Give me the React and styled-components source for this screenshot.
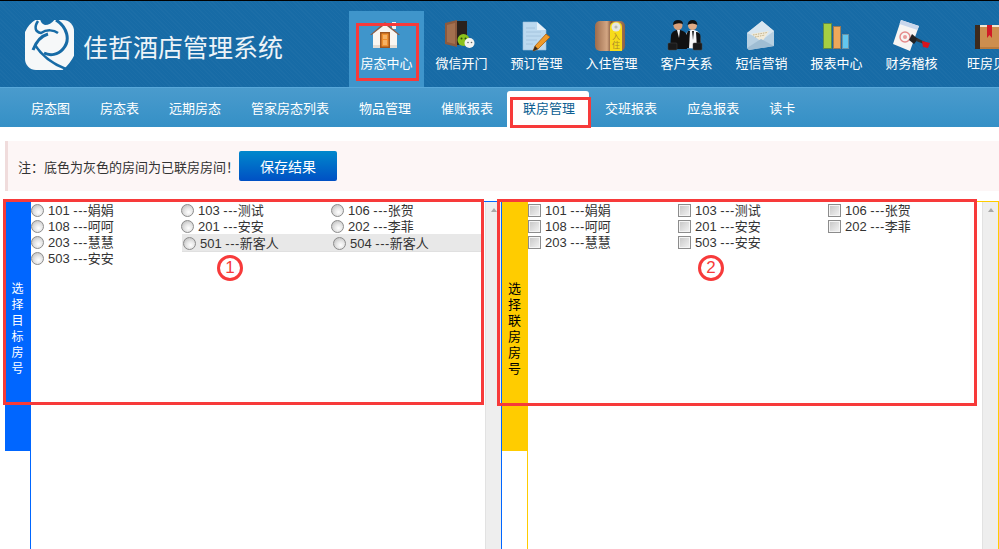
import React from "react";
import styled, { createGlobalStyle } from "styled-components";

const Global = createGlobalStyle`
  html, body {
    margin: 0;
    padding: 0;
    background: #fff;
  }
  body {
    font-family: "Liberation Sans", "Noto Sans CJK SC", sans-serif;
    font-size: 13px;
    color: #333;
  }
`;

const navItems = [
  { label: "房态中心", icon: "home", active: true },
  { label: "微信开门", icon: "door" },
  { label: "预订管理", icon: "doc" },
  { label: "入住管理", icon: "checkin" },
  { label: "客户关系", icon: "people" },
  { label: "短信营销", icon: "mail" },
  { label: "报表中心", icon: "bars" },
  { label: "财务稽核", icon: "stamp" },
  { label: "旺房贝", icon: "book" },
];

const tabs = ["房态图", "房态表", "远期房态", "管家房态列表", "物品管理", "催账报表", "联房管理", "交班报表", "应急报表", "读卡"];

const targetRooms = [
  { no: 101, name: "娟娟" },
  { no: 103, name: "测试" },
  { no: 106, name: "张贺" },
  { no: 108, name: "呵呵" },
  { no: 201, name: "安安" },
  { no: 202, name: "李菲" },
  { no: 203, name: "慧慧" },
  { no: 501, name: "新客人", linked: true },
  { no: 504, name: "新客人", linked: true },
  { no: 503, name: "安安" },
];

const joinRooms = [
  { no: 101, name: "娟娟" },
  { no: 103, name: "测试" },
  { no: 106, name: "张贺" },
  { no: 108, name: "呵呵" },
  { no: 201, name: "安安" },
  { no: 202, name: "李菲" },
  { no: 203, name: "慧慧" },
  { no: 503, name: "安安" },
];

function Logo() {
  const bg = "#176ba6";
  return (
    <svg width="50" height="50" viewBox="0 0 50 50">
      <rect x="0" y="0" width="49" height="50" rx="11" fill="#f6f8f9" />
      {/* corners and top notch */}
      <path d="M-1 -1 L12 -1 Q4 3 0 12Z" fill={bg} />
      <path d="M15 -1 L30 -1 Q26 5 20 5 Q16 4 15 -1Z" fill={bg} />
      <path d="M36 51 Q44 46 50 34 L50 51Z" fill={bg} />
      {/* swirl bands */}
      <path d="M31 0 C42 7 46 20 38 29 C33 35 25 36 19 33" fill="none" stroke={bg} strokeWidth="3" />
      <path d="M13 1 C9 7 10 12 16 13 C22 9 29 10 33 13" fill="none" stroke={bg} strokeWidth="2.5" />
      <path d="M8 30 C11 22 16 16 23 14" fill="none" stroke={bg} strokeWidth="3" />
      <path d="M10 25 C17 36 29 45 44 50" fill="none" stroke={bg} strokeWidth="2.5" />
    </svg>
  );
}

function NavIcon({ name }) {
  switch (name) {
    case "home":
      return (
        <svg width="40" height="32" viewBox="0 0 40 32">
          <path d="M6 13 L18 3 L30 13 L30 28 L6 28Z" fill="#f9f6f1" />
          <path d="M6 25 L30 25 L30 28 L6 28Z" fill="#e4ddd4" />
          <rect x="25" y="2" width="4" height="7" fill="#f4f4f4" />
          <path d="M3 15 L18 2 L33 15 L31.5 15 L18 4.5 L4.5 15Z" fill="#8a5a44" />
          <rect x="13" y="12" width="10" height="16" fill="#a0561e" />
          <rect x="14.5" y="13.5" width="7" height="13" fill="#ef9030" />
          <rect x="16" y="15" width="4" height="4" fill="#f7b264" />
          <rect x="16" y="20" width="4" height="5" fill="#f7b264" />
        </svg>
      );
    case "door":
      return (
        <svg width="40" height="32" viewBox="0 0 40 32">
          <rect x="12" y="1" width="13" height="24" fill="#2b211c" />
          <path d="M3 3 L15 0 L15 27 L3 24Z" fill="#8c5a3e" />
          <path d="M5 5 L13 3 L13 24 L5 22Z" fill="#a3704f" />
          <circle cx="21.5" cy="20" r="6" fill="#8bc21c" />
          <circle cx="19.5" cy="18.5" r="1" fill="#2b4a10" />
          <circle cx="23.5" cy="18.5" r="1" fill="#2b4a10" />
          <circle cx="27.5" cy="23" r="5" fill="#f4f4f0" />
          <circle cx="26" cy="22.5" r="0.8" fill="#666" />
          <circle cx="29.5" cy="22.5" r="0.8" fill="#666" />
        </svg>
      );
    case "doc":
      return (
        <svg width="40" height="32" viewBox="0 0 40 32">
          <path d="M6 2 L20 2 L29 10 L29 30 L6 30Z" fill="#bcd9ef" stroke="#9cc0dc" strokeWidth="0.6" />
          <path d="M20 2 L20 10 L29 10Z" fill="#e6f1f9" />
          <path d="M9 8 H18 M9 12 H24 M9 16 H24 M9 20 H20 M9 24 H16" stroke="#a4c4de" strokeWidth="1" />
          <path d="M29 14 L33 17 L21 29 L16 31 L18 26Z" fill="#f09a28" stroke="#a85f12" strokeWidth="0.8" />
          <path d="M16 31 L18 26 L21 29Z" fill="#3a2a1a" />
        </svg>
      );
    case "checkin":
      return (
        <svg width="40" height="32" viewBox="0 0 40 32">
          <defs>
            <linearGradient id="wood" x1="0" y1="0" x2="1" y2="0">
              <stop offset="0" stopColor="#9c6c4c" />
              <stop offset="0.4" stopColor="#d3a683" />
              <stop offset="0.55" stopColor="#7b4f35" />
              <stop offset="0.7" stopColor="#b98a68" />
              <stop offset="1" stopColor="#8a5f44" />
            </linearGradient>
          </defs>
          <rect x="3" y="1" width="30" height="30" rx="5" fill="url(#wood)" />
          <path d="M18 7 Q18 2 24 2 Q30 2 30 7 L30 31 L18 31Z" fill="#f7dc1a" />
          <circle cx="24" cy="7" r="4.5" fill="#e6e6e0" />
          <circle cx="24" cy="7" r="1.6" fill="#b9b9b0" />
          <TagText x="24" y="19">入</TagText>
          <TagText x="24" y="28">住</TagText>
        </svg>
      );
    case "people":
      return (
        <svg width="40" height="32" viewBox="0 0 40 32">
          <path d="M3 29 L4 15 Q5 11 10 10 L13 10 Q18 11 20 15 L20 29Z" fill="#111" />
          <path d="M10 10 L13 10 L12 18Z" fill="#f4f4f4" />
          <circle cx="11" cy="5.5" r="4.5" fill="#d9a07a" />
          <path d="M6 5 Q6 0 11 0 Q16 0 16 4 Q11 2 6 5Z" fill="#111" />
          <path d="M19 28 L19 14 Q20 11 24 10 L27 10 Q32 11 33 15 L34 29Z" fill="#f7f7f7" />
          <path d="M29 12 Q33 12 33.5 16 L34 29 L30 29Z" fill="#111" />
          <path d="M19 15 L21 11 L23 11 L22 28 L19 28Z" fill="#111" />
          <path d="M25 11 L27 11 L26 20Z" fill="#222" />
          <circle cx="25.5" cy="5.5" r="4.5" fill="#e0ab86" />
          <path d="M20.5 5 Q21 0 25.5 0 Q30 0 30.5 5 Q25 2 20.5 5Z" fill="#111" />
          <rect x="1" y="23" width="9" height="7" rx="1" fill="#1a1a1a" stroke="#444" strokeWidth="0.5" />
          <rect x="26" y="23" width="9" height="7" rx="1" fill="#1a1a1a" stroke="#444" strokeWidth="0.5" />
        </svg>
      );
    case "mail":
      return (
        <svg width="40" height="32" viewBox="0 0 40 32">
          <path d="M5 13 L20 1 L32 11 L32 26 L7 30 L5 28Z" fill="#b7d0e2" />
          <path d="M5 13 L20 1 L32 11 L20 20Z" fill="#d8e6f0" />
          <path d="M9 14 L27 11 L20 22Z" fill="#f1ead8" />
          <path d="M11 15 L25 12.5 M13 17 L23 15" stroke="#c4b38a" strokeWidth="1" strokeDasharray="1.5 1" />
          <path d="M5 28 L19 19 L32 26 L7 30Z" fill="#9fbdd3" />
        </svg>
      );
    case "bars":
      return (
        <svg width="40" height="32" viewBox="0 0 40 32">
          <rect x="6.5" y="3.5" width="8" height="25" fill="#a6cf42" stroke="#5f8a4a" />
          <rect x="16.5" y="6.5" width="7" height="22" fill="#f0a85a" stroke="#9a7a55" />
          <rect x="25.5" y="14.5" width="6" height="14" fill="#62c6ee" stroke="#6a94a8" />
        </svg>
      );
    case "stamp":
      return (
        <svg width="40" height="32" viewBox="0 0 40 32">
          <path d="M9 0 L27 6 L18 31 L1 24Z" fill="#f7f5f3" />
          <path d="M9 0 L27 6 L25.5 10 L7.5 4Z" fill="#c9d7ec" />
          <circle cx="13" cy="17" r="5" fill="none" stroke="#e58a8a" strokeWidth="1.4" />
          <circle cx="13" cy="17" r="2" fill="#ea9a9a" />
          <path d="M20 14 L26 19 L22 24 L17 20Z" fill="#222" />
          <path d="M25 18 L33 22 L32 24 L24 21Z" fill="#333" />
          <path d="M30 21 L38 23 L36 28 L31 27Z" fill="#d8141e" />
        </svg>
      );
    case "book":
      return (
        <svg width="40" height="32" viewBox="0 0 40 32">
          <rect x="8" y="5" width="32" height="24" fill="#b97b3e" />
          <rect x="13" y="7" width="27" height="20" fill="#cd8e4e" />
          <rect x="8" y="5" width="5" height="24" fill="#3d2a1c" />
          <rect x="13" y="5" width="27" height="2" fill="#f2e6d2" />
          <path d="M20 5 L25 5 L25 18 L22.5 15 L20 18Z" fill="#d11a26" />
        </svg>
      );
    default:
      return null;
  }
}

export default function App() {
  return (
    <Page>
      <Global />
      <Header>
        <Brand>
          <Logo />
          <BrandTitle>佳哲酒店管理系统</BrandTitle>
        </Brand>
        <Nav>
          {navItems.map((item) => (
            <NavItem key={item.label} $active={item.active}>
              <NavIcon name={item.icon} />
              <NavLabel>{item.label}</NavLabel>
            </NavItem>
          ))}
        </Nav>
      </Header>

      <TabBar>
        {tabs.map((tab) => (
          <Tab key={tab} $active={tab === "联房管理"}>
            {tab}
          </Tab>
        ))}
      </TabBar>

      <Notice>
        <NoticeText>注：底色为灰色的房间为已联房房间！</NoticeText>
        <SaveButton>保存结果</SaveButton>
      </Notice>

      <Panes>
        <Pane $color="#0066ff">
          <Rail $color="#0066ff">
            <RailFill $color="#0066ff" $text="#fff" $size={12}>选择目标房号</RailFill>
          </Rail>
          <RoomList>
            {targetRooms.map((room) => (
              <Room key={room.no} $linked={room.linked}>
                <Radio />
                <RoomName>
                  {room.no} <Dashes>---</Dashes>{room.name}
                </RoomName>
              </Room>
            ))}
          </RoomList>
          <ScrollTrack />
        </Pane>
        <Pane $color="#ffcc00">
          <Rail $color="#ffcc00">
            <RailFill $color="#ffcc00" $text="#000" $size={13}>选择联房房号</RailFill>
          </Rail>
          <RoomList>
            {joinRooms.map((room) => (
              <Room key={room.no}>
                <Check />
                <RoomName>
                  {room.no} <Dashes>---</Dashes>{room.name}
                </RoomName>
              </Room>
            ))}
          </RoomList>
          <ScrollTrack />
        </Pane>
      </Panes>

      <RedBox $x={356} $y={23} $w={63} $h={58} />
      <RedBox $x={510} $y={97} $w={81} $h={31} />
      <RedBox $x={3} $y={199} $w={481} $h={206} />
      <RedBox $x={497} $y={199} $w={480} $h={207} />
      <Badge $x={217} $y={255}>1</Badge>
      <Badge $x={698} $y={255}>2</Badge>
    </Page>
  );
}

const Page = styled.div`
  position: relative;
  height: 100vh;
  display: flex;
  flex-direction: column;
  overflow: hidden;
`;

const Header = styled.header`
  flex: none;
  display: flex;
  height: 87px;
  box-sizing: border-box;
  border-top: 1px solid #000;
  background-color: #176ba6;
  background-image: repeating-linear-gradient(45deg, rgba(255, 255, 255, 0.018) 0 1px, transparent 1px 3px);
  overflow: hidden;
`;

const Brand = styled.div`
  flex: none;
  width: 349px;
  box-sizing: border-box;
  padding: 19px 0 0 25px;
  display: flex;
  align-items: flex-start;
  gap: 8px;
`;

const BrandTitle = styled.h1`
  margin: 13px 0 0;
  font-size: 25px;
  line-height: 30px;
  font-weight: 400;
  color: #eef4f8;
  white-space: nowrap;
`;

const Nav = styled.nav`
  display: flex;
  align-items: flex-end;
  height: 100%;
`;

const NavItem = styled.div`
  flex: none;
  width: 75px;
  height: 76px;
  box-sizing: border-box;
  padding-top: 9px;
  display: flex;
  flex-direction: column;
  align-items: center;
  background: ${(p) => (p.$active ? "#3f95cb" : "transparent")};
`;

const NavLabel = styled.span`
  margin-top: 4px;
  font-size: 13px;
  line-height: 16px;
  color: #fff;
  white-space: nowrap;
`;

const TagText = styled.text`
  font-size: 8px;
  fill: #a8862a;
  text-anchor: middle;
`;

const TabBar = styled.div`
  flex: none;
  display: flex;
  height: 40px;
  box-sizing: border-box;
  padding-left: 16px;
  border-top: 1px solid #58a8da;
  background: linear-gradient(#4a9bcd, #3590c6);
`;

const Tab = styled.div`
  padding: 0 15px;
  margin-top: 3px;
  height: 36px;
  line-height: 36px;
  font-size: 13px;
  white-space: nowrap;
  color: #fff;
  border-radius: 3px 3px 0 0;
  ${(p) =>
    p.$active &&
    `
    margin-left: -1px;
    margin-right: 1px;
    padding: 0 14px 0 16px;
    color: #0c5f93;
    background: #fff;
  `}
`;

const Notice = styled.div`
  flex: none;
  display: flex;
  align-items: center;
  height: 50px;
  margin: 14px 0 10px 5px;
  padding-left: 10px;
  border-left: 3px solid #f0dcdc;
  background: #fdf6f6;
`;

const NoticeText = styled.span`
  font-size: 13px;
  color: #333;
`;

const SaveButton = styled.button`
  width: 98px;
  height: 30px;
  padding: 0;
  border: 0;
  border-radius: 2px;
  background: linear-gradient(#0088cc, #0050c4);
  color: #fff;
  font: inherit;
  font-size: 14px;
`;

const Panes = styled.div`
  flex: 1;
  display: flex;
  min-height: 0;
  padding-left: 5px;
`;

const Pane = styled.section`
  flex: 0 0 497px;
  box-sizing: border-box;
  display: flex;
  border-top: 1px solid ${(p) => p.$color};
  border-right: 1px solid ${(p) => p.$color};
`;

const Rail = styled.div`
  flex: none;
  width: 26px;
  box-sizing: border-box;
  border-right: 1px solid ${(p) => p.$color};
`;

const RailFill = styled.div`
  height: 249px;
  box-sizing: border-box;
  padding: 6px 3px 0 0;
  display: flex;
  align-items: center;
  justify-content: center;
  writing-mode: vertical-rl;
  letter-spacing: ${(p) => 16 - p.$size}px;
  font-size: ${(p) => p.$size}px;
  line-height: 22px;
  background: ${(p) => p.$color};
  color: ${(p) => p.$text};
`;

const RoomList = styled.div`
  flex: 1;
  min-width: 0;
  display: grid;
  grid-template-columns: repeat(3, 150px);
  grid-auto-rows: 16px;
  align-content: start;
`;

const Room = styled.label`
  display: flex;
  align-items: center;
  gap: 4px;
  height: ${(p) => (p.$linked ? "17px" : "16px")};
  box-sizing: border-box;
  color: #333;
  white-space: nowrap;
  ${(p) =>
    p.$linked &&
    `
    margin: 0 -1px 0 1px;
    padding: 1px 0 0 1px;
    background: #e8e8e8;
    box-shadow: 0 1px 0 #e0e0e0;
  `}
`;

const RoomName = styled.span`
  margin-top: -2px;
`;

const Dashes = styled.span`
  letter-spacing: 0.5px;
`;

const Radio = styled.input.attrs({ type: "radio", readOnly: true })`
  appearance: none;
  flex: none;
  width: 13px;
  height: 13px;
  margin: 0;
  border: 1px solid #8c8c8c;
  border-radius: 50%;
  background: radial-gradient(circle at 60% 65%, #fff 0, #e6e6e6 40%, #b4b4b4 100%);
`;

const Check = styled.input.attrs({ type: "checkbox", readOnly: true })`
  appearance: none;
  flex: none;
  width: 13px;
  height: 13px;
  margin: 0;
  border: 1px solid #8c8c8c;
  box-shadow: inset 0 0 0 1px #f4f4f4;
  background: linear-gradient(135deg, #c4c4c4, #f4f4f4);
`;

const ScrollTrack = styled.div`
  flex: none;
  width: 16px;
  box-sizing: border-box;
  padding-top: 6px;
  display: flex;
  justify-content: center;
  background: #eee;
  border-left: 1px solid #e2e2e2;
  &::before {
    content: "";
    width: 0;
    height: 0;
    border: 3.5px solid transparent;
    border-top: 0;
    border-bottom: 4px solid #a8a8a8;
  }
`;

const RedBox = styled.div`
  position: absolute;
  left: ${(p) => p.$x}px;
  top: ${(p) => p.$y}px;
  width: ${(p) => p.$w}px;
  height: ${(p) => p.$h}px;
  box-sizing: border-box;
  border: 3px solid #f73a3a;
`;

const Badge = styled.div`
  position: absolute;
  left: ${(p) => p.$x}px;
  top: ${(p) => p.$y}px;
  width: 26px;
  height: 26px;
  box-sizing: border-box;
  border: 3px solid #f73a3a;
  border-radius: 50%;
  background: #fff;
  color: #f73a3a;
  font-size: 17px;
  line-height: 20px;
  text-align: center;
`;
